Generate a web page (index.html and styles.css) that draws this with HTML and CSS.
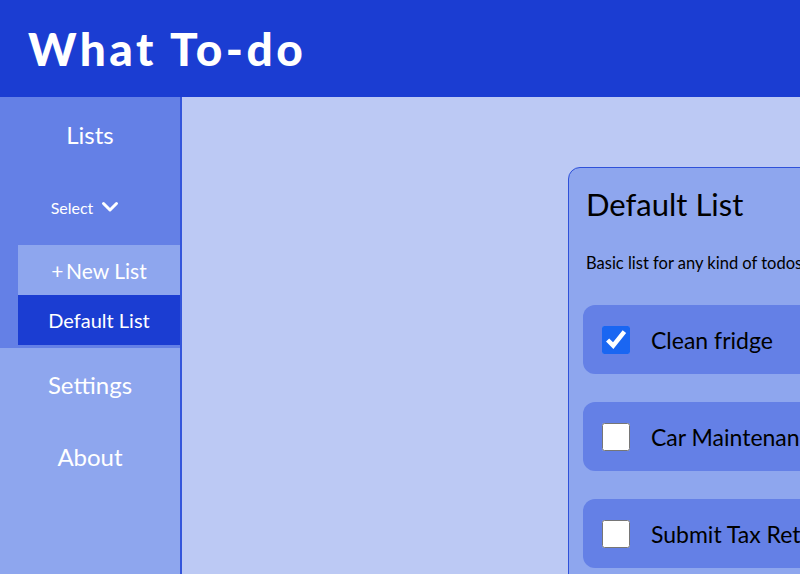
FILE: index.html
```html
<!DOCTYPE html>
<html lang="en">
<head>
<meta charset="utf-8">
<title>What To-do</title>
<link rel="stylesheet" href="styles.css">
</head>
<body>
<header class="topbar">
  <h1 class="brand">What To-do</h1>
</header>
<div class="layout">
  <aside class="sidebar">
    <section class="lists-panel">
      <h2 class="lists-title">Lists</h2>
      <button class="select-btn" type="button">Select
        <svg class="chev" viewBox="0 0 18 18" width="18" height="18" aria-hidden="true"><path d="M2.5 5.5 L9 12 L15.5 5.5" fill="none" stroke="#fff" stroke-width="3" stroke-linecap="round" stroke-linejoin="round"/></svg>
      </button>
      <ul class="list-menu">
        <li class="list-item new">+&#8201;New List</li>
        <li class="list-item active">Default List</li>
      </ul>
    </section>
    <nav class="nav">
      <a class="nav-link">Settings</a>
      <a class="nav-link">About</a>
    </nav>
  </aside>
  <main class="main">
    <section class="card">
      <h2 class="card-title">Default List</h2>
      <p class="card-desc">Basic list for any kind of todos</p>
      <ul class="todos">
        <li class="todo"><input type="checkbox" class="check" checked><span class="todo-text">Clean fridge</span></li>
        <li class="todo"><input type="checkbox" class="check"><span class="todo-text">Car Maintenance</span></li>
        <li class="todo"><input type="checkbox" class="check"><span class="todo-text">Submit Tax Return</span></li>
      </ul>
    </section>
  </main>
</div>
</body>
</html>
```
FILE: styles.css
```css
* { box-sizing: border-box; }
html, body { margin: 0; padding: 0; height: 100%; }
body {
  font-family: "Lato", "Open Sans", sans-serif;
  overflow: hidden;
  background: #bcc9f4;
}
.topbar {
  height: 97px;
  background: #1b3dd2;
  display: flex;
  align-items: center;
  padding-left: 28px;
}
.brand {
  margin: 0;
  color: #fff;
  font-size: 46px;
  font-weight: 900;
  letter-spacing: 3.5px;
}
.layout {
  display: flex;
  height: calc(100% - 97px);
}
.sidebar {
  width: 182px;
  flex: none;
  border-right: 2px solid #3355db;
  background: #8ea6ee;
  display: flex;
  flex-direction: column;
}
.lists-panel {
  background: #6480e6;
  padding-bottom: 3px;
}
.lists-title {
  margin: 0;
  height: 74px;
  display: flex;
  align-items: center;
  justify-content: center;
  color: #fff;
  font-weight: 400;
  font-size: 24px;
}
.select-btn {
  display: flex;
  align-items: center;
  justify-content: center;
  gap: 8px;
  width: 100%;
  height: 72px;
  background: none;
  border: 0;
  color: #fff;
  font-family: inherit;
  font-size: 16px;
  padding: 0 10px 0 0;
}
.chev { display: block; }
.list-menu {
  list-style: none;
  margin: 2px 0 0 18px;
  padding: 0;
}
.list-item {
  height: 50px;
  display: flex;
  align-items: center;
  justify-content: center;
  color: #fff;
  font-size: 20px;
}
.list-item.new { background: #8ea6ee; font-size: 21px; }
.list-item.active { background: #1b3dd2; }
.nav {
  display: flex;
  flex-direction: column;
}
.nav-link {
  height: 72px;
  display: flex;
  align-items: center;
  justify-content: center;
  color: #fff;
  font-size: 24px;
}
.main {
  flex: 1;
  background: #bcc9f4;
  padding: 70px 0 0 386px;
  overflow: hidden;
}
.card {
  width: 420px;
  background: #8ea6ee;
  border: 1px solid #2f51d9;
  border-radius: 12px;
  padding: 0 14px 20px;
  min-height: 600px;
}
.card-title {
  margin: 0;
  padding: 16px 0 0 3px;
  font-size: 31px;
  font-weight: 400;
  color: #000;
  line-height: 40px;
}
.card-desc {
  margin: 0;
  padding: 29px 0 0 3px;
  font-size: 16.5px;
  line-height: 20px;
  color: #000;
  white-space: nowrap;
}
.todos {
  list-style: none;
  margin: 0;
  padding: 32px 0 0;
  display: flex;
  flex-direction: column;
  gap: 28px;
}
.todo {
  height: 69px;
  background: #6480e6;
  border-radius: 12px;
  display: flex;
  align-items: center;
  padding-left: 19px;
  gap: 21px;
}
.check {
  width: 28px;
  height: 28px;
  margin: 0;
  flex: none;
  accent-color: #1a66f2;
}
.todo-text {
  font-size: 23px;
  color: #000;
  white-space: nowrap;
}
```
